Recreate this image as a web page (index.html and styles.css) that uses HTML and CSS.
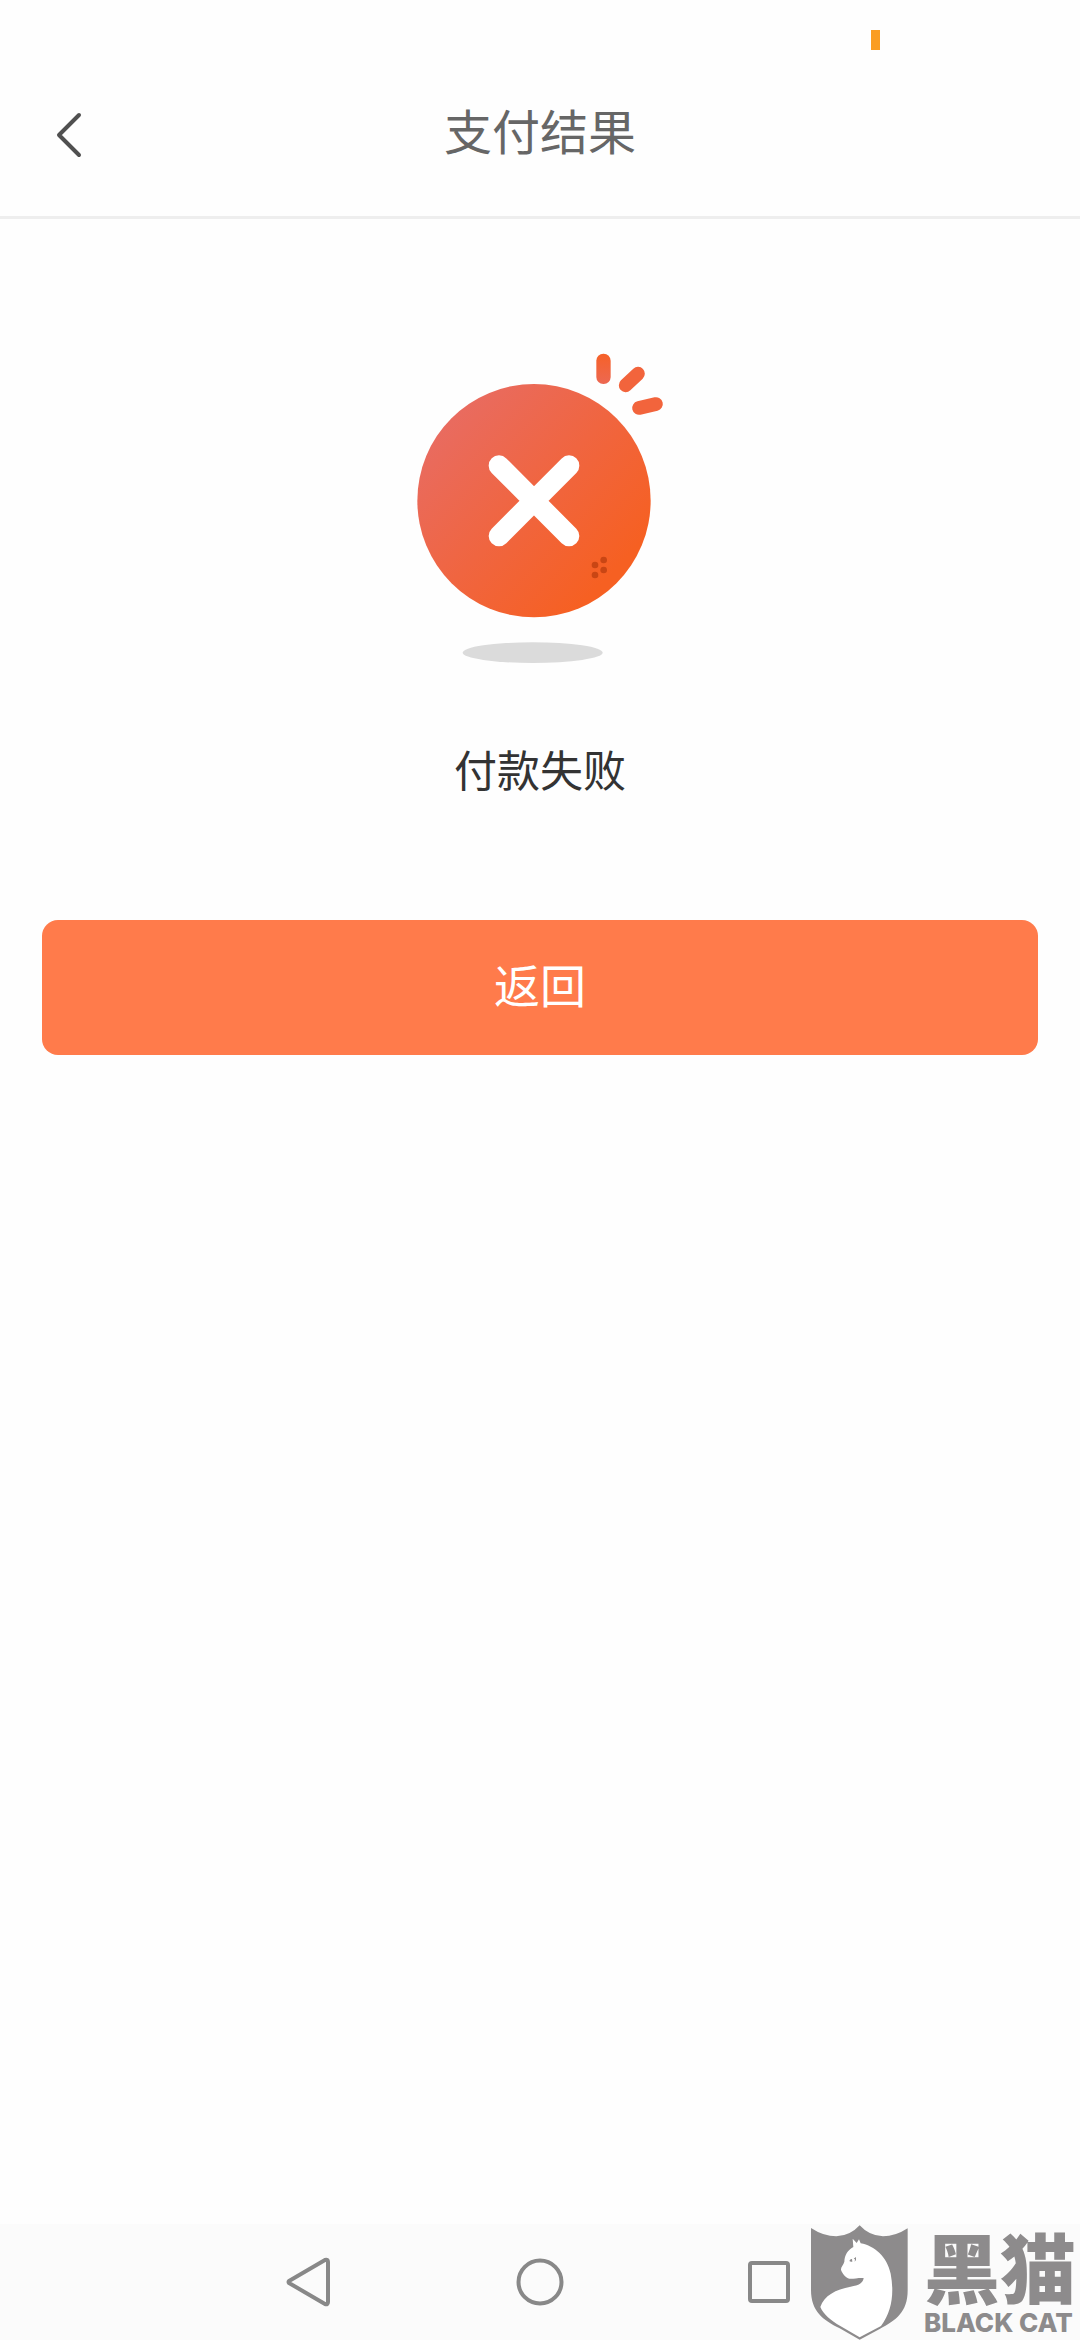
FILE: index.html
```html
<!DOCTYPE html>
<html lang="zh-CN">
<head>
<meta charset="utf-8">
<meta name="viewport" content="width=device-width, initial-scale=1">
<title>支付结果</title>
<link rel="stylesheet" href="styles.css">
</head>
<body>
<div class="screen">
  <div class="status"><span class="status-mark"></span></div>
  <header class="header">
    <button class="icon-button" type="button" aria-label="后退">
      <svg width="32" height="48" viewBox="0 0 32 48" fill="none" stroke="#505050" stroke-width="4" stroke-linecap="round" stroke-linejoin="round"><path d="M24 5 4 25 24 45"/></svg>
    </button>
    <h1 class="title">支付结果</h1>
  </header>

  <main class="content">
    <svg class="illustration" viewBox="0 0 840 1020" aria-hidden="true">
      <defs>
        <linearGradient id="disc" x1="0.1" y1="0.2" x2="0.8" y2="0.85">
          <stop offset="0" stop-color="#e96b5f"/>
          <stop offset="0.5" stop-color="#f06540"/>
          <stop offset="1" stop-color="#f66022"/>
        </linearGradient>
        <linearGradient id="ray" x1="0" y1="0" x2="0" y2="1">
          <stop offset="0" stop-color="#f66128"/>
          <stop offset="1" stop-color="#ec6852"/>
        </linearGradient>
      </defs>
      <circle cx="402" cy="482" r="350" fill="url(#disc)"/>
      <path d="M297 377 507 588M507 377 297 588" stroke="#fff" stroke-width="62" stroke-linecap="round"/>
      <rect x="589" y="41" width="43" height="91" rx="21" fill="url(#ray)"/>
      <path d="M677 136 714 101M717 204 768 192" stroke="#f2643c" stroke-width="41" stroke-linecap="round"/>
      <g fill="#c94614">
        <circle cx="611" cy="660" r="10"/><circle cx="585" cy="675" r="10"/>
        <circle cx="611" cy="690" r="10"/><circle cx="585" cy="705" r="10"/>
      </g>
      <ellipse cx="398" cy="938" rx="210" ry="31" fill="#dbdbdb"/>
    </svg>
    <p class="message">付款失败</p>
    <button class="primary" type="button">返回</button>
  </main>

  <nav class="navbar" aria-label="系统导航">
    <button class="icon-button" type="button" aria-label="返回键">
      <svg width="50" height="60" viewBox="0 0 50 60" fill="none" stroke="#888" stroke-width="4" stroke-linejoin="round"><path d="M4 31Q3 30 4 29L40 8Q43 7 43 10V50Q43 53 40 52Z"/></svg>
    </button>
    <button class="icon-button" type="button" aria-label="主页键">
      <svg width="50" height="60" viewBox="0 0 50 60" fill="none" stroke="#888" stroke-width="4"><circle cx="25" cy="30" r="21.5"/></svg>
    </button>
    <button class="icon-button" type="button" aria-label="最近任务键">
      <svg width="50" height="60" viewBox="0 0 50 60" fill="none" stroke="#888" stroke-width="4"><rect x="5" y="11" width="38" height="38" rx="2"/></svg>
    </button>
    <div class="watermark">
      <svg class="shield" viewBox="94 75 291 343" aria-hidden="true">
        <path fill="#8d8b8c" d="M94 83Q132 108 170 108Q211 107 240 75Q269 107 310 108Q347 108 384 84V270C384 336 349 360 300 386L240 418L180 384C130 358 94 334 94 268Z"/>
        <path fill="#fff" d="M219 115 231 128 238 117 243 129C285 137 322 169 333 220C344 278 337 334 304 377L240 411L182 377C154 361 131 342 122 320C133 286 168 267 213 259C238 255 250 248 252 233C235 232 221 236 209 235C199 233 186 217 184 208C183 200 192 193 194 184C195 164 204 150 221 140Z"/>
        <path fill="#8d8b8c" d="M209 182Q212 175 217 176L218 184Q212 185 209 182M222 175 229 170Q231 179 225 184L226 177Z"/>
      </svg>
      <div class="wordmark">
        <span class="wordmark-cn">黑猫</span>
        <span class="wordmark-en">BLACK CAT</span>
      </div>
    </div>
  </nav>
</div>
</body>
</html>
```
FILE: styles.css
```css
* {
  box-sizing: border-box;
}

body {
  margin: 0;
  background: #fefefe;
  font-family: Roboto, "Noto Sans CJK SC", sans-serif;
}

button {
  border: 0;
  font: inherit;
  cursor: pointer;
}

.screen {
  display: flex;
  flex-direction: column;
  min-height: 100vh;
}

.status {
  display: flex;
  justify-content: flex-end;
  height: 80px;
  padding: 30px 200px 0 0;
}

.status-mark {
  width: 9px;
  height: 20px;
  background: #fa9d22;
}

.header {
  display: grid;
  grid-template-columns: 80px 1fr 80px;
  align-items: center;
  height: 139px;
  padding: 0 55px 28px;
  border-bottom: 3px solid #eee;
}

.icon-button {
  display: flex;
  padding: 0;
  background: none;
}

.title {
  margin: 0;
  color: #666;
  font-size: 48px;
  font-weight: 400;
  line-height: 72px;
  text-align: center;
}

.content {
  display: flex;
  flex: 1;
  flex-direction: column;
  align-items: center;
  padding: 121px 42px 0;
}

.illustration {
  width: 280px;
  height: 340px;
}

.message {
  margin: 60px 0 0;
  color: #333;
  font-size: 43px;
  line-height: 64px;
}

.primary {
  width: 100%;
  height: 135px;
  margin-top: 116px;
  padding: 0 0 10px;
  border-radius: 16px;
  background: #ff7b4b;
  color: #fff;
  font-size: 46px;
}

.navbar {
  position: relative;
  display: flex;
  justify-content: center;
  align-items: center;
  gap: 180px;
  height: 116px;
  background: #fbfbfb;
}

.watermark {
  position: absolute;
  right: 2px;
  bottom: 0;
  display: flex;
  gap: 16px;
  color: #8d8b8c;
}

.shield {
  width: 97px;
  height: 115px;
}

.wordmark {
  display: flex;
  flex-direction: column;
  gap: 6px;
  width: 154px;
  padding-top: 4px;
  white-space: nowrap;
}

.wordmark-cn {
  font-family: "Noto Sans CJK SC", sans-serif;
  font-size: 76px;
  font-weight: 900;
  line-height: 72px;
}

.wordmark-en {
  font-family: Inter, sans-serif;
  font-size: 26px;
  font-weight: 800;
  line-height: 32px;
}
```
